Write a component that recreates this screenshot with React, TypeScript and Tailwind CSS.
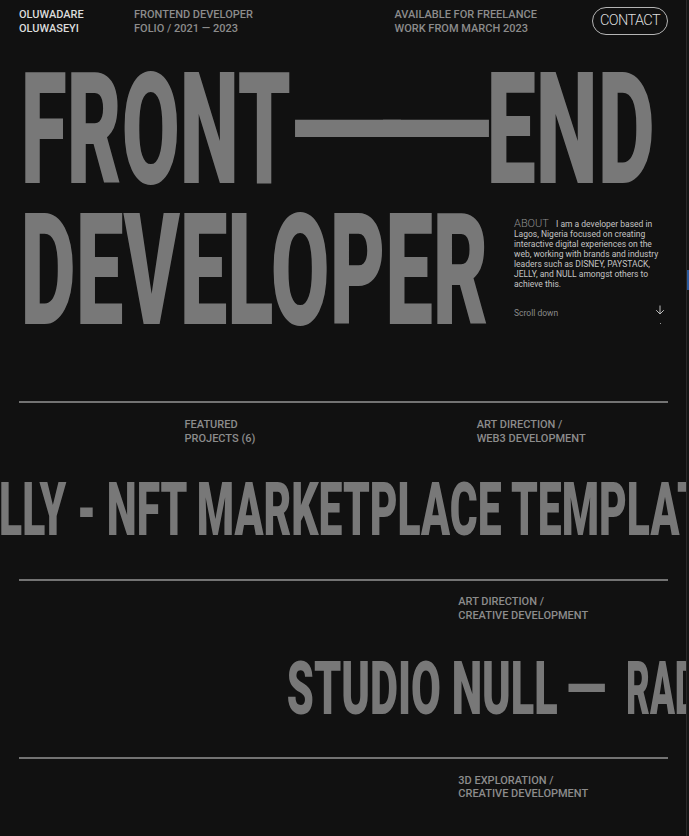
import React, { useLayoutEffect, useState } from "react";

let _ctx: CanvasRenderingContext2D | null = null;
function getCtx() {
  if (!_ctx) _ctx = document.createElement("canvas").getContext("2d");
  return _ctx as CanvasRenderingContext2D;
}

// at: char index whose ink-left (or ink-right when end) maps to x; "end" = ink-right of whole text
type Pt = { at: number | "end"; x: number; end?: boolean };

function computeFit(text: string, font: string, a: Pt, b: Pt, ls = 0) {
  const c = getCtx() as CanvasRenderingContext2D & { letterSpacing?: string };
  c.font = font;
  c.letterSpacing = `${ls}px`;
  const pos = (p: Pt) => {
    if (p.at === "end") return c.measureText(text).actualBoundingBoxRight;
    const adv = c.measureText(text.slice(0, p.at)).width;
    const m = c.measureText(text.charAt(p.at));
    return p.end ? adv + m.actualBoundingBoxRight : adv - m.actualBoundingBoxLeft;
  };
  const p1 = pos(a);
  const p2 = pos(b);
  const s = (b.x - a.x) / (p2 - p1);
  c.letterSpacing = "0px";
  return { s, o: a.x - s * p1 };
}

function Fit({
  text,
  font,
  a,
  b,
  ls,
  className = "",
}: {
  text: string;
  font: string;
  a: Pt;
  b: Pt;
  ls?: number;
  className?: string;
}) {
  const [t, setT] = useState<{ s: number; o: number } | null>(null);
  useLayoutEffect(() => {
    const run = () => setT(computeFit(text, font, a, b, ls ?? 0));
    run();
    if (document.fonts) document.fonts.ready.then(run);
    // eslint-disable-next-line react-hooks/exhaustive-deps
  }, [text, font]);
  return (
    <span
      className={"block w-max whitespace-nowrap origin-top-left " + className}
      style={t ? { transform: `translateX(${t.o}px) scaleX(${t.s})` } : { visibility: "hidden" }}
    >
      {text}
    </span>
  );
}

const BIG = "900 155px Roboto";
const DASH = "700 155px Roboto";
const MID = "900 75px Roboto";
const MIDDASH = "700 75px Roboto";

function Line() {
  return <div className="mx-[19px] w-[649px] h-[2px] bg-[#737373]" />;
}

function ArrowDown() {
  return (
    <svg width="10" height="10" viewBox="0 0 10 10" fill="none" stroke="#bdbdbd" strokeWidth="1">
      <path d="M5 0.5 V9" />
      <path d="M1.2 5.2 L5 9 L8.8 5.2" />
    </svg>
  );
}

export default function App() {
  const jelly = "JELLY - NFT MARKETPLACE TEMPLATE";
  return (
    <div className="relative w-full h-[836px] overflow-hidden bg-[#111111] font-['Roboto',sans-serif]">
      {/* Header */}
      <header className="flex h-[59.5px] pt-[7.3px] text-[11px] leading-[14px] font-medium">
        <div className="ml-[19px] w-[115px] pt-[0.8px] text-[#dcdcdc]">
          OLUWADARE
          <br />
          OLUWASEYI
        </div>
        <div className="w-[260.5px] pt-[0.8px] text-[#8c8c8c]">
          FRONTEND DEVELOPER
          <br />
          FOLIO / 2021 — 2023
        </div>
        <div className="w-[197.5px] pt-[0.8px] text-[#8c8c8c]">
          AVAILABLE FOR FREELANCE
          <br />
          WORK FROM MARCH 2023
        </div>
        <div className="w-[76px] h-[27.4px] rounded-full border border-[#b5b5b5] flex items-center justify-center text-[14.5px] font-light tracking-[-0.6px] text-[#dedede]">
          CONTACT
        </div>
      </header>

      {/* Headline row 1 */}
      <div className="flex h-[141px] text-[155px] leading-[141px] text-[#787878]">
        <div className="ml-[25px] w-[269px] h-[141px] font-black">
          <Fit text="FRONT" font={BIG} a={{ at: 0, x: 0 }} b={{ at: "end", x: 264.3 }} />
        </div>
        <div className="w-[197px] h-[141px] font-bold">
          <Fit text="——" font={DASH} ls={-31} className="tracking-[-31px]" a={{ at: 0, x: 0 }} b={{ at: "end", x: 195.3 }} />
        </div>
        <div className="w-[161px] h-[141px] font-black">
          <Fit text="END" font={BIG} a={{ at: 0, x: 0 }} b={{ at: "end", x: 160.7 }} />
        </div>
      </div>

      {/* Headline row 2 + about */}
      <div className="flex h-[141px]">
        <div className="ml-[25px] w-[489px] h-[141px] text-[155px] leading-[141px] font-black text-[#787878]">
          <Fit text="DEVELOPER" font={BIG} a={{ at: 0, x: 0 }} b={{ at: "end", x: 461.7 }} />
        </div>
        <div className="w-[151px] pt-[18.8px] text-[8.5px] leading-[10px] text-[#c4c4c4]">
          <p className="whitespace-nowrap">
            <span className="text-[11px] leading-[10px] font-light text-[#8f8f8f] mr-[5px]">ABOUT</span>{" "}
            I am a developer based in
            <br />
            Lagos, Nigeria focused on creating
            <br />
            interactive digital experiences on the
            <br />
            web, working with brands and industry
            <br />
            leaders such as DISNEY, PAYSTACK,
            <br />
            JELLY, and NULL amongst others to
            <br />
            achieve this.
          </p>
          <div className="mt-[19px] flex justify-between items-start">
            <span className="text-[#8a8a8a]">Scroll down</span>
            <div className="-mt-[3px] flex flex-col items-center">
              <ArrowDown />
              <div className="mt-[8px] w-[1px] h-[1px] bg-[#9a9a9a]" />
            </div>
          </div>
        </div>
      </div>

      {/* Projects */}
      <div className="mt-[59.5px]">
        <Line />
        <div className="flex pt-[15px] text-[11px] leading-[13.5px] font-medium text-[#8c8c8c]">
          <div className="ml-[184.5px] w-[292.2px]">
            FEATURED
            <br />
            PROJECTS (6)
          </div>
          <div>
            ART DIRECTION /
            <br />
            WEB3 DEVELOPMENT
          </div>
        </div>
        <div className="mt-[26.85px] mb-[32.15px] h-[75px] overflow-hidden text-[75px] leading-[75px] font-black text-[#787878]">
          <Fit text={jelly} font={MID} a={{ at: 8, x: 109 }} b={{ at: jelly.indexOf("TEMPLATE"), x: 514 }} />
        </div>

        <Line />
        <div className="flex pt-[13.6px] text-[11px] leading-[14px] font-medium text-[#8c8c8c]">
          <div className="ml-[458.3px]">
            ART DIRECTION /
            <br />
            CREATIVE DEVELOPMENT
          </div>
        </div>
        <div className="mt-[28.55px] mb-[30.85px] h-[75px] overflow-hidden flex text-[75px] leading-[75px] text-[#787878]">
          <div className="w-[288.3px] shrink-0" />
          <div className="w-[279.4px] shrink-0 font-black">
            <Fit text="STUDIO NULL" font={MID} a={{ at: 0, x: 0 }} b={{ at: "end", x: 269.4 }} />
          </div>
          <div className="w-[60px] shrink-0 font-bold">
            <Fit text="—" font={MIDDASH} a={{ at: 0, x: 0 }} b={{ at: "end", x: 37.3 }} />
          </div>
          <div className="shrink-0 font-black">
            <Fit text="RADIO STATION" font={MID} a={{ at: 0, x: 0 }} b={{ at: 1, end: true, x: 47.3 }} />
          </div>
        </div>

        <Line />
        <div className="flex pt-[14.6px] text-[11px] leading-[13.5px] font-medium text-[#8c8c8c]">
          <div className="ml-[458.3px]">
            3D EXPLORATION /
            <br />
            CREATIVE DEVELOPMENT
          </div>
        </div>
      </div>

      {/* scrollbar edge */}
      <div className="absolute right-0 top-0 bottom-0 w-[3px] bg-[#151515] border-l border-[#2a2a2a]" />
      <div className="absolute right-0 top-[270px] h-[20px] w-[2px] bg-[#2b5a9e]" />
    </div>
  );
}
